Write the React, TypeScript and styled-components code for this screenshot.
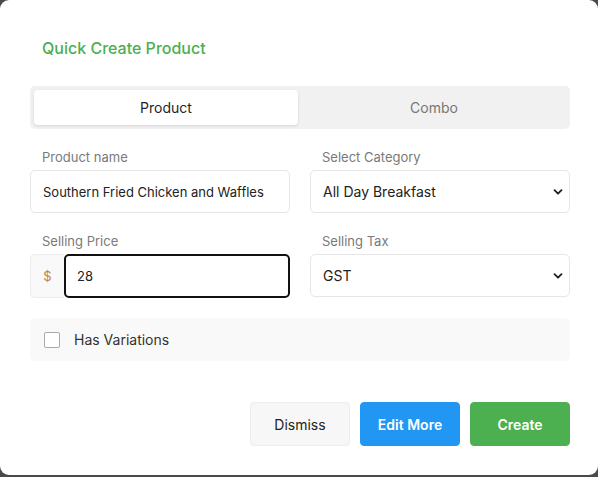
import { useState } from 'react'
import styled, { createGlobalStyle } from 'styled-components'

const GlobalStyle = createGlobalStyle`
  html, body {
    margin: 0;
    padding: 0;
    background: #4a4a4a;
    font-family: Inter, "Noto Sans", "Liberation Sans", sans-serif;
  }
  * { box-sizing: border-box; }
`

const Modal = styled.div`
  width: 598px;
  height: 475px;
  background: #ffffff;
  border-radius: 9px;
  padding: 36px 28px 0 30px;
  display: flex;
  flex-direction: column;
`

const Title = styled.h2`
  margin: 0 0 26px;
  padding-left: 12px;
  font-size: 16px;
  line-height: 24px;
  font-weight: 500;
  color: #4caf50;
`

const Tabs = styled.div`
  height: 43px;
  background: #f1f1f1;
  border-radius: 5px;
  padding: 4px;
  display: grid;
  grid-template-columns: 1fr 1fr;
  gap: 4px;
`

const Tab = styled.button<{ $active?: boolean }>`
  border: none;
  border-radius: 4px;
  font-family: inherit;
  font-size: 14px;
  font-weight: 400;
  cursor: pointer;
  background: ${(p) => (p.$active ? '#ffffff' : 'transparent')};
  color: ${(p) => (p.$active ? '#1f1f2b' : '#777777')};
  box-shadow: ${(p) => (p.$active ? '0 1px 3px rgba(0,0,0,0.12)' : 'none')};
`

const FieldGrid = styled.div`
  margin-top: 18px;
  display: grid;
  grid-template-columns: 1fr 1fr;
  column-gap: 20px;
  row-gap: 18px;
`

const Field = styled.label`
  display: flex;
  flex-direction: column;
`

const Label = styled.span`
  padding-left: 12px;
  margin-bottom: 3px;
  font-size: 13px;
  line-height: 20px;
  color: #7a7a7a;
`

const TextInput = styled.input<{ $focused?: boolean }>`
  height: 43px;
  width: 100%;
  border: ${(p) => (p.$focused ? '2px solid #111' : '1px solid #e6e6e6')};
  border-radius: 5px;
  padding: 0 ${(p) => (p.$focused ? '11px' : '12px')};
  font-family: inherit;
  font-size: 13px;
  color: #222;
  background: #fff;
  outline: none;
`

const Group = styled.div`
  display: flex;
  height: 44px;
`

const Addon = styled.span`
  width: 34px;
  flex: none;
  display: flex;
  align-items: center;
  justify-content: center;
  background: #f9f9f9;
  border: 1px solid #ececec;
  border-right: none;
  border-radius: 5px 0 0 5px;
  color: #c0814e;
  font-size: 13px;
`

const GroupInput = styled(TextInput)`
  height: 100%;
  flex: 1;
`

const SelectWrap = styled.div`
  position: relative;
  height: 43px;
`

const Select = styled.select`
  appearance: none;
  width: 100%;
  height: 100%;
  border: 1px solid #e6e6e6;
  border-radius: 5px;
  padding: 0 30px 0 12px;
  font-family: inherit;
  font-size: 14px;
  color: #222;
  background: #fff;
  outline: none;
`

const Chevron = styled.svg`
  position: absolute;
  right: 7px;
  top: 50%;
  transform: translateY(-50%);
  pointer-events: none;
`

const CheckRow = styled.label`
  margin-top: 20px;
  height: 43px;
  background: #f9f9f9;
  border-radius: 5px;
  display: flex;
  align-items: center;
  gap: 14px;
  padding-left: 14px;
  font-size: 14px;
  font-weight: 400;
  color: #333;
`

const Box = styled.span`
  width: 16px;
  height: 16px;
  border: 1.5px solid #a9a9a9;
  border-radius: 2px;
  background: #fff;
`

const Footer = styled.div`
  margin-top: 41px;
  display: flex;
  justify-content: flex-end;
  gap: 10px;
`

const variants = {
  plain: { bg: '#f7f7f7', fg: '#222', border: '#ececec', weight: 400 },
  blue: { bg: '#2196f3', fg: '#fff', border: '#2196f3', weight: 600 },
  green: { bg: '#4caf50', fg: '#fff', border: '#4caf50', weight: 600 },
}

const Button = styled.button<{ $variant: keyof typeof variants }>`
  width: 100px;
  height: 44px;
  border-radius: 4px;
  font-family: inherit;
  font-size: 14px;
  cursor: pointer;
  font-weight: ${(p) => variants[p.$variant].weight};
  background: ${(p) => variants[p.$variant].bg};
  color: ${(p) => variants[p.$variant].fg};
  border: 1px solid ${(p) => variants[p.$variant].border};
`

const ChevronIcon = () => (
  <Chevron width="10" height="10" viewBox="0 0 10 10">
    <path d="M1.5 3.2 L5 6.7 L8.5 3.2" fill="none" stroke="#222" strokeWidth="1.9" strokeLinecap="round" strokeLinejoin="round" />
  </Chevron>
)

export default function App() {
  const [tab, setTab] = useState('product')
  const [name, setName] = useState('Southern Fried Chicken and Waffles')
  const [price, setPrice] = useState('28')

  return (
    <>
      <GlobalStyle />
      <Modal>
        <Title>Quick Create Product</Title>
        <Tabs>
          <Tab $active={tab === 'product'} onClick={() => setTab('product')}>Product</Tab>
          <Tab $active={tab === 'combo'} onClick={() => setTab('combo')}>Combo</Tab>
        </Tabs>
        <FieldGrid>
          <Field>
            <Label>Product name</Label>
            <TextInput value={name} onChange={(e) => setName(e.target.value)} />
          </Field>
          <Field>
            <Label>Select Category</Label>
            <SelectWrap>
              <Select defaultValue="all">
                <option value="all">All Day Breakfast</option>
              </Select>
              <ChevronIcon />
            </SelectWrap>
          </Field>
          <Field>
            <Label>Selling Price</Label>
            <Group>
              <Addon>$</Addon>
              <GroupInput $focused value={price} onChange={(e) => setPrice(e.target.value)} />
            </Group>
          </Field>
          <Field>
            <Label>Selling Tax</Label>
            <SelectWrap>
              <Select defaultValue="gst">
                <option value="gst">GST</option>
              </Select>
              <ChevronIcon />
            </SelectWrap>
          </Field>
        </FieldGrid>
        <CheckRow>
          <Box />
          Has Variations
        </CheckRow>
        <Footer>
          <Button $variant="plain">Dismiss</Button>
          <Button $variant="blue">Edit More</Button>
          <Button $variant="green">Create</Button>
        </Footer>
      </Modal>
    </>
  )
}
